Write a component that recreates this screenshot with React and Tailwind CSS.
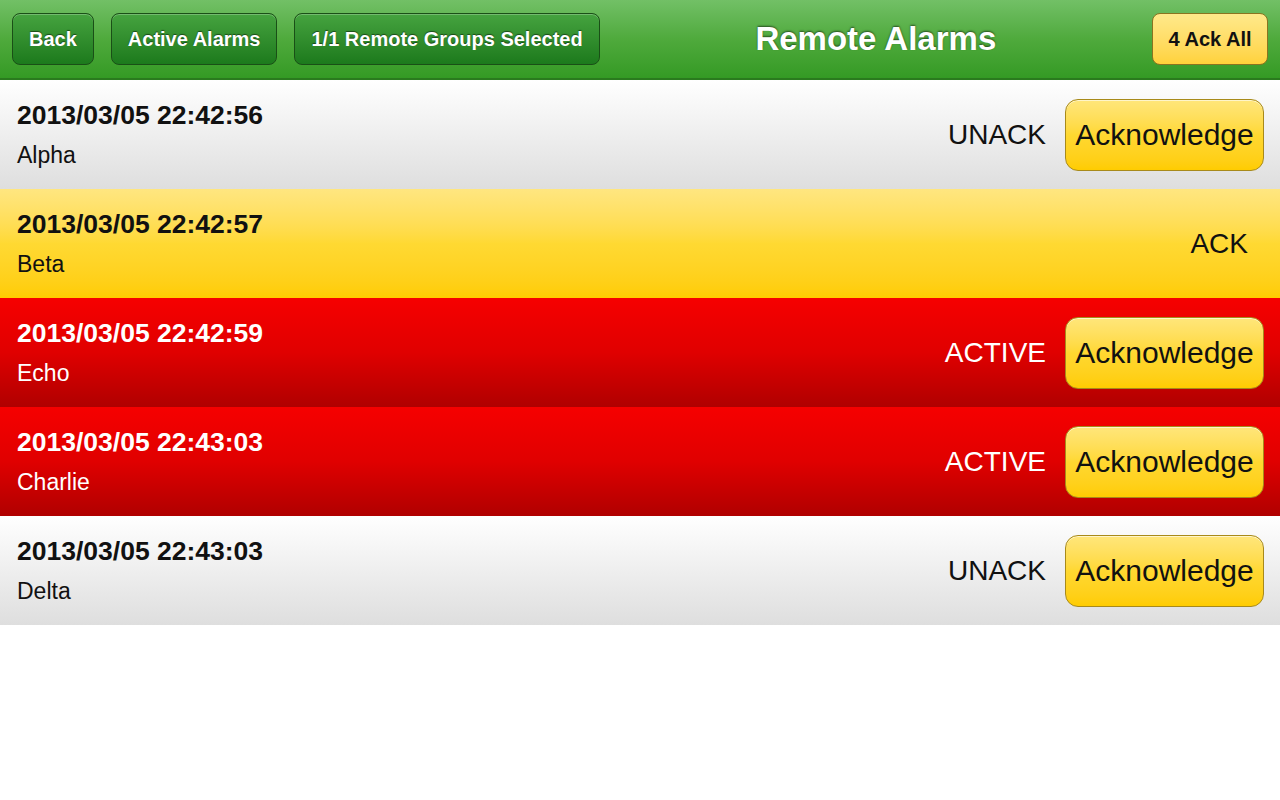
const alarms = [
  { time: "2013/03/05 22:42:56", name: "Alpha", status: "UNACK", kind: "unack" },
  { time: "2013/03/05 22:42:57", name: "Beta", status: "ACK", kind: "ack" },
  { time: "2013/03/05 22:42:59", name: "Echo", status: "ACTIVE", kind: "active" },
  { time: "2013/03/05 22:43:03", name: "Charlie", status: "ACTIVE", kind: "active" },
  { time: "2013/03/05 22:43:03", name: "Delta", status: "UNACK", kind: "unack" },
];

const rowStyles = {
  unack: "bg-gradient-to-b from-[#ffffff] to-[#dedede] text-[#111]",
  ack: "bg-gradient-to-b from-[#ffe680] via-[#ffd932] to-[#ffcc00] text-[#111]",
  active: "bg-gradient-to-b from-[#f60000] via-[#e00000] to-[#b00000] text-white",
};

function HeaderButton({ children }) {
  return (
    <button className="h-[52px] px-[16px] rounded-[8px] border border-[#1a4f17] bg-gradient-to-b from-[#45a33f] to-[#1c7a1c] text-white text-[20px] font-bold shadow-[inset_0_1px_0_rgba(255,255,255,0.25)] [text-shadow:0_-1px_1px_rgba(0,0,0,0.5)]">
      {children}
    </button>
  );
}

function AckButton() {
  return (
    <button className="w-[199px] h-[72px] rounded-[13px] border border-[#a88a1a] bg-gradient-to-b from-[#ffe67a] via-[#ffd830] to-[#ffcc00] text-[#111] text-[30px] leading-none shadow-[inset_0_1px_0_rgba(255,255,255,0.6)]">
      Acknowledge
    </button>
  );
}

function AlarmRow({ alarm }) {
  return (
    <div className={`h-[109px] flex items-start justify-between pl-[17px] ${rowStyles[alarm.kind]}`}>
      <div className="pt-[20px]">
        <div className="text-[26.5px] font-bold leading-[30px]">{alarm.time}</div>
        <div className="text-[23px] leading-[28px] mt-[11px]">{alarm.name}</div>
      </div>
      {alarm.kind === "ack" ? (
        <div className="self-center pr-[32px] text-[28px]">{alarm.status}</div>
      ) : (
        <div className="self-center flex items-center gap-[19px] pr-[16px]">
          <span className="text-[28px]">{alarm.status}</span>
          <AckButton />
        </div>
      )}
    </div>
  );
}

export default function App() {
  return (
    <div className="w-[1280px] h-[800px] bg-white overflow-hidden font-['Liberation_Sans',Arial,sans-serif]">
      {/* Top bar */}
      <div className="h-[80px] flex items-center gap-[17px] px-[12px] bg-gradient-to-b from-[#72c066] via-[#4faa3c] to-[#349a24] border-b-2 border-[#2a7a1e]">
        <HeaderButton>Back</HeaderButton>
        <HeaderButton>Active Alarms</HeaderButton>
        <HeaderButton>1/1 Remote Groups Selected</HeaderButton>
        <div className="flex-1 text-center text-white text-[33px] font-bold [text-shadow:0_-1px_2px_rgba(0,0,0,0.55)]">
          Remote Alarms
        </div>
        <button className="w-[116px] h-[52px] rounded-[8px] border border-[#8a7420] bg-gradient-to-b from-[#ffe98a] to-[#ffd23a] text-[#111] text-[20px] font-bold">
          4 Ack All
        </button>
      </div>

      {/* Alarm list */}
      <div>
        {alarms.map((a, i) => (
          <AlarmRow key={i} alarm={a} />
        ))}
      </div>
    </div>
  );
}
